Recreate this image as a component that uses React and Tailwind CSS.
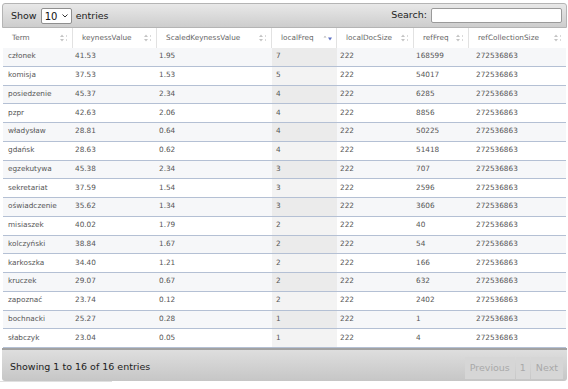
import React from "react";

const rows = [
  ["członek", "41.53", "1.95", "7", "222", "168599"],
  ["komisja", "37.53", "1.53", "5", "222", "54017"],
  ["posiedzenie", "45.37", "2.34", "4", "222", "6285"],
  ["pzpr", "42.63", "2.06", "4", "222", "8856"],
  ["władysław", "28.81", "0.64", "4", "222", "50225"],
  ["gdańsk", "28.63", "0.62", "4", "222", "51418"],
  ["egzekutywa", "45.38", "2.34", "3", "222", "707"],
  ["sekretariat", "37.59", "1.54", "3", "222", "2596"],
  ["oświadczenie", "35.62", "1.34", "3", "222", "3606"],
  ["misiaszek", "40.02", "1.79", "2", "222", "40"],
  ["kolczyński", "38.84", "1.67", "2", "222", "54"],
  ["karkoszka", "34.40", "1.21", "2", "222", "166"],
  ["kruczek", "29.07", "0.67", "2", "222", "632"],
  ["zapoznać", "23.74", "0.12", "2", "222", "2402"],
  ["bochnacki", "25.27", "0.28", "1", "222", "1"],
  ["słabczyk", "23.04", "0.05", "1", "222", "4"],
];

const headers = [
  "Term",
  "keynessValue",
  "ScaledKeynessValue",
  "localFreq",
  "localDocSize",
  "refFreq",
  "refCollectionSize",
];

const cols = "grid grid-cols-[70px_84px_115px_65px_77px_55px_97px]";

function SortIcon({ active }) {
  if (active) {
    return (
      <svg width="9" height="7" viewBox="0 0 9 7">
        <path d="M0.5 2.5 L2 0.8 L3.5 2.5Z" fill="#b5b5b5" />
        <path d="M5 2.5 L9 2.5 L7 5.5Z" fill="#5a6fc4" />
      </svg>
    );
  }
  return (
    <svg width="8" height="8" viewBox="0 0 8 8">
      <path d="M0 3 L2 0.5 L4 3Z" fill="#c4c4c4" />
      <path d="M0 5 L4 5 L2 7.5Z" fill="#c4c4c4" />
      <rect x="6" y="1" width="1" height="2" fill="#dadada" />
      <rect x="6" y="5" width="1" height="2" fill="#dadada" />
    </svg>
  );
}

const dataPad = [
  "pl-[5px]",
  "pl-[2px]",
  "pl-[2px]",
  "pl-[4px]",
  "pl-[3px]",
  "pl-[2px]",
  "pl-[7px]",
];

export default function App() {
  return (
    <div className="w-[568px] h-[389px] bg-white pt-[3px] pl-[2px] font-['DejaVu_Sans',sans-serif]">
      <div className="w-[565px]">
        {/* top toolbar */}
        <div className="h-[25px] flex items-center justify-between pl-[8px] pr-[4px] bg-gradient-to-b from-[#e8e8e8] to-[#cdcdcd] border border-[#b4b4b4] rounded-t-[3px] text-[9.5px] text-[#222]">
          <div className="flex items-center pt-[1px]">
            <span>Show</span>
            <div className="ml-[4px] mr-[4px] w-[31px] h-[16px] bg-white border border-[#8f8f8f] rounded-[2px] flex items-center justify-between pl-[3px] pr-[3px]">
              <span className="text-[10px] text-[#111]">10</span>
              <svg width="6" height="4" viewBox="0 0 6 4">
                <path d="M0.5 0.5 L3 3 L5.5 0.5" fill="none" stroke="#333" strokeWidth="1" />
              </svg>
            </div>
            <span>entries</span>
          </div>
          <div className="flex items-center">
            <span className="mr-[4px]">Search:</span>
            <div className="w-[131px] h-[15px] bg-white border border-[#9a9a9a] rounded-[2px]" />
          </div>
        </div>

        {/* table */}
        <div className="px-[1px]">
          <div className={`${cols} h-[20px] bg-white text-[7.3px] text-[#666]`}>
            {headers.map((h, i) => (
              <div
                key={h}
                className={`flex items-center justify-between pl-[9px] pr-[4px] ${
                  i < 6 ? "border-r border-[#e2e2e2]" : ""
                }`}
              >
                <span>{h}</span>
                <SortIcon active={i === 3} />
              </div>
            ))}
          </div>
          {rows.map((r, ri) => {
            const odd = ri % 2 === 0;
            return (
              <div
                key={ri}
                className={`${cols} h-[18.75px] border-b border-[#b4c0d4] text-[7.3px] text-[#555] ${
                  odd ? "bg-[#f6f7f9]" : "bg-white"
                }`}
              >
                {[...r, "272536863"].map((c, ci) => (
                  <div
                    key={ci}
                    className={`flex items-center ${dataPad[ci]} ${
                      ci === 3 ? (odd ? "bg-[#ebebeb]" : "bg-[#f3f3f3]") : ""
                    }`}
                  >
                    {c}
                  </div>
                ))}
              </div>
            );
          })}
        </div>

        {/* footer */}
        <div className="h-[33px] flex items-center justify-between pl-[8px] pr-[4px] bg-gradient-to-b from-[#dedede] to-[#c6c6c6] border-t-2 border-[#a2a2a2] rounded-b-[3px] text-[9.5px] text-[#222]">
          <span className="pt-[4px]">Showing 1 to 16 of 16 entries</span>
          <div className="flex items-center gap-[1px] text-[#a9a9a9] text-[9.5px] self-end mb-[2px]">
            <div className="h-[22px] px-[5px] flex items-center bg-[#d6d6d6]">Previous</div>
            <div className="h-[22px] px-[4px] flex items-center bg-[#d6d6d6]">1</div>
            <div className="h-[22px] px-[5px] flex items-center bg-[#d6d6d6]">Next</div>
          </div>
        </div>
        <div className="w-[112px] h-[1px] bg-[#e0e0e0] -ml-[2px]" />
      </div>
    </div>
  );
}
